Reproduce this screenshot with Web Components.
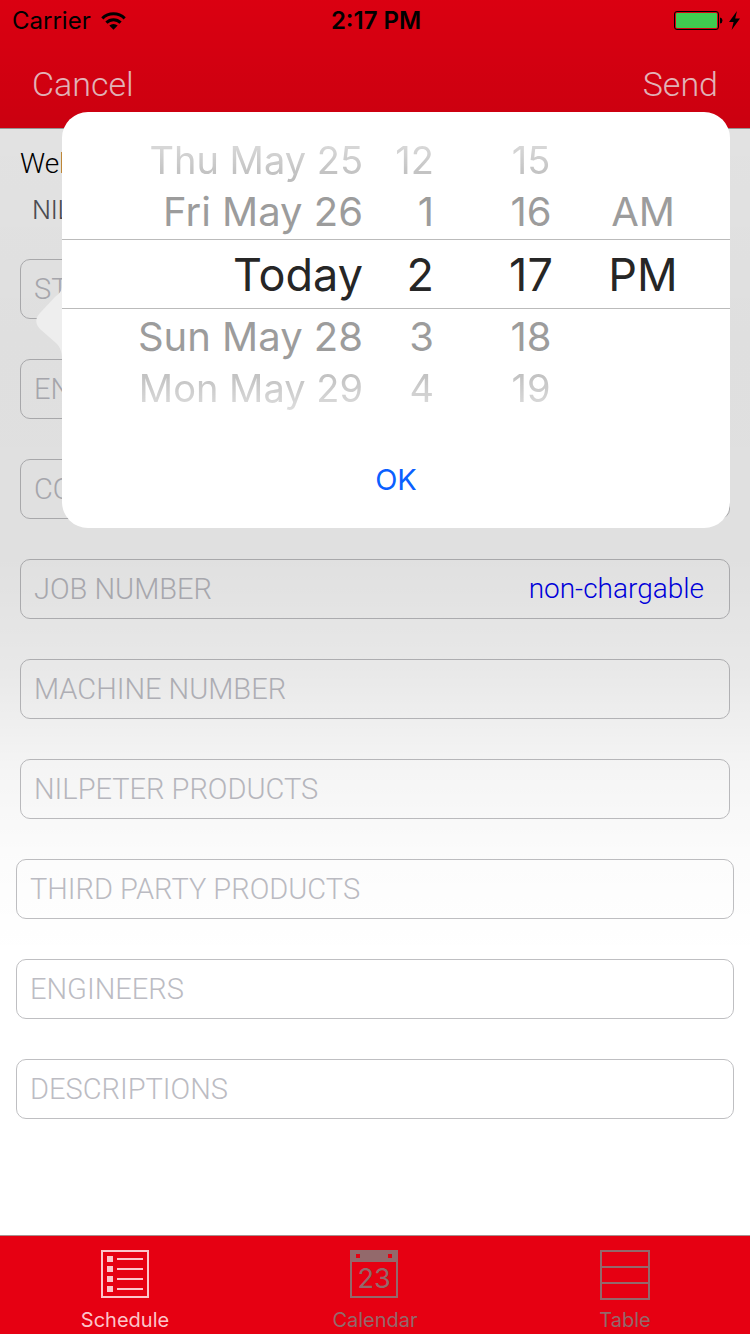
<!DOCTYPE html>
<html lang="en">
<head>
<meta charset="utf-8">
<meta name="viewport" content="width=device-width, initial-scale=1">
<title>Schedule</title>
<style>
  body { margin: 0; background: #fff; font-family: Inter, "Liberation Sans", sans-serif; }
</style>
</head>
<body>
<schedule-app>
  <status-bar slot="top" carrier="Carrier" time="2:17 PM"></status-bar>
  <nav-bar slot="top">
    <nav-action slot="left">Cancel</nav-action>
    <nav-action slot="right">Send</nav-action>
  </nav-bar>

  <form-intro>
    <span slot="title">Wel</span>
    <span slot="subtitle">NIL</span>
  </form-intro>
  <form-field placeholder="ST"></form-field>
  <form-field placeholder="EN"></form-field>
  <form-field placeholder="CO"></form-field>
  <form-field placeholder="JOB NUMBER" action="non-chargable"></form-field>
  <form-field placeholder="MACHINE NUMBER"></form-field>
  <form-field placeholder="NILPETER PRODUCTS"></form-field>
  <form-field wide placeholder="THIRD PARTY PRODUCTS"></form-field>
  <form-field wide placeholder="ENGINEERS"></form-field>
  <form-field wide placeholder="DESCRIPTIONS"></form-field>

  <date-popover slot="popover">
    <picker-wheel label="Date" items="Thu May 25|Fri May 26|Today|Sun May 28|Mon May 29"></picker-wheel>
    <picker-wheel label="Hour" items="12|1|2|3|4"></picker-wheel>
    <picker-wheel label="Minute" align="center" items="15|16|17|18|19"></picker-wheel>
    <picker-wheel label="Period" align="center" items="|AM|PM||"></picker-wheel>
  </date-popover>

  <tab-bar slot="bottom">
    <tab-item active label="Schedule">
      <svg width="50" height="50" viewBox="0 0 50 50" fill="currentColor" aria-hidden="true">
        <path fill-rule="evenodd" d="M1 0h48v48H1zM3 2v44h44V2z"/>
        <path d="M7 6h6v6H7zM7 16h6v6H7zM7 26h6v6H7zM7 36h6v6H7zM17 8h26v2H17zM17 18h26v2H17zM17 28h26v2H17zM17 38h26v2H17z"/>
      </svg>
    </tab-item>
    <tab-item label="Calendar">
      <svg width="50" height="50" viewBox="0 0 50 50" fill="currentColor" aria-hidden="true">
        <path fill-rule="evenodd" d="M0 0h48v48H0zM2 12v34h44V12zM6 4v4h4V4zM38 4v4h4V4z"/>
        <text x="24" y="38" text-anchor="middle" font-size="27" font-family="Inter, sans-serif">23</text>
      </svg>
    </tab-item>
    <tab-item label="Table">
      <svg width="50" height="50" viewBox="0 0 50 50" fill="none" stroke="currentColor" stroke-width="2" aria-hidden="true">
        <path d="M1 1h48v48H1zM1 17h48M1 33h48"/>
      </svg>
    </tab-item>
  </tab-bar>
</schedule-app>

<script>
const define = (name, render) => customElements.define(name, class extends HTMLElement {
  connectedCallback() {
    if (this.shadowRoot) return;
    this.attachShadow({ mode: 'open' }).innerHTML = render(this);
  }
});

define('schedule-app', () => `
  <style>
    :host { display: flex; flex-direction: column; min-height: 100vh; position: relative; background: #fff; }
    header { background: #e60012; border-bottom: 1px solid #a8a8a8; }
    main { flex: 1; display: flex; flex-direction: column; gap: 40px; padding-bottom: 40px; }
    .shade {
      position: absolute; inset: 0; pointer-events: none;
      background: linear-gradient(to bottom,
        rgba(0,0,0,.05) 0%, rgba(0,0,0,.115) 9%, rgba(0,0,0,.125) 25%, rgba(0,0,0,.122) 42%,
        rgba(0,0,0,.09) 50%, rgba(0,0,0,.04) 58%, rgba(0,0,0,.012) 65%, rgba(0,0,0,0) 72%);
    }
    ::slotted([slot=popover]) { position: absolute; top: 112px; left: 62px; right: 20px; }
  </style>
  <header><slot name="top"></slot></header>
  <main><slot></slot></main>
  <slot name="bottom"></slot>
  <div class="shade"></div>
  <slot name="popover"></slot>`);

define('status-bar', el => `
  <style>
    :host { display: grid; grid-template-columns: 1fr auto 1fr; align-items: center; height: 40px; padding: 0 10px 0 12px; color: #000; font-size: 24px; line-height: 42px; }
    .left, .right { display: flex; align-items: center; gap: 10px; }
    .right { justify-content: flex-end; gap: 6px; line-height: 40px; }
    .time { font-weight: 600; }
  </style>
  <span class="left">${el.getAttribute('carrier')}
    <svg width="25" height="18" viewBox="0 0 25 18" fill="none" stroke="#000" stroke-width="3" aria-label="Wi-Fi">
      <path d="M1.3 6.4a16 16 0 0 1 22.4 0M5.4 10.6a10 10 0 0 1 14.2 0"/>
      <path d="M12.5 17.8 8.3 13.6a6 6 0 0 1 8.4 0z" fill="#000" stroke="none"/>
    </svg>
  </span>
  <span class="time">${el.getAttribute('time')}</span>
  <span class="right">
    <svg width="49" height="20" viewBox="0 0 49 20" aria-label="Battery">
      <rect x=".5" y=".5" width="44" height="18" rx="2.5" fill="none" stroke="#000"/>
      <rect x="2" y="2" width="41" height="15" rx="1" fill="#44d955"/>
      <path d="M46 6.5a3 3 0 0 1 2.5 3 3 3 0 0 1-2.5 3z"/>
    </svg>
    <svg width="11" height="20" viewBox="0 0 11 20" aria-label="Charging"><path d="M8 0 0 11h4.6L2.6 19 11 7.6H6.2z"/></svg>
  </span>`);

define('nav-bar', () => `
  <style>
    :host { display: block; }
    nav { display: flex; align-items: center; justify-content: space-between; height: 88px; padding: 0 32px; }
  </style>
  <nav><slot name="left"></slot><slot name="right"></slot></nav>`);

define('nav-action', () => `
  <style>
    :host { display: block; }
    button { border: 0; padding: 0; background: none; color: #f9c5ca; font: 350 34px/40px Roboto, sans-serif; cursor: pointer; }
  </style>
  <button type="button"><slot></slot></button>`);

define('form-intro', () => `
  <style>
    :host { display: block; height: 90px; }
    h1, p { margin: 0; }
    h1 { padding: 18px 20px 0; color: #000; font: 300 28px/34px Roboto, sans-serif; }
    p { padding: 12px 32px 0; color: #55565c; font: 300 25px/34px Inter, sans-serif; }
  </style>
  <h1><slot name="title"></slot></h1>
  <p><slot name="subtitle"></slot></p>`);

define('form-field', el => `
  <style>
    :host { display: block; margin: 0 20px; }
    :host([wide]) { margin: 0 16px; }
    label { display: flex; align-items: center; box-sizing: border-box; height: 60px; padding: 0 25px 0 13px; border: 1px solid #bfbfc2; border-radius: 10px; }
    input { flex: 1; min-width: 0; height: 56px; border: 0; padding: 0; outline: 0; background: none; color: #333; font: 300 29px/34px Roboto, sans-serif; }
    input::placeholder { color: #bcbcc3; opacity: 1; }
    button { border: 0; padding: 0; background: none; color: #0000f5; font: 300 28px/34px Roboto, sans-serif; cursor: pointer; }
  </style>
  <label><input type="text" aria-label="${el.getAttribute('placeholder')}" placeholder="${el.getAttribute('placeholder')}">
  ${el.hasAttribute('action') ? `<button type="button">${el.getAttribute('action')}</button>` : ''}</label>`);

define('date-popover', () => `
  <style>
    :host { display: block; }
    .panel { position: relative; z-index: 1; box-sizing: border-box; padding: 24px 0 28px; border-radius: 26px; background: #fff; }
    .arrow { position: absolute; top: 174px; left: -26px; }
    .wheels { position: relative; display: grid; grid-template-columns: 301fr 71fr 46fr 102fr 122fr 26fr; }
    ::slotted(:nth-child(3)) { grid-column: 4; }
    .band { position: absolute; top: 103px; left: 0; right: 0; height: 68px; border: solid #bbb; border-width: 1px 0; }
    button { display: block; margin: 47px auto 0; border: 0; padding: 0 16px; background: none; color: #0a60ff; font: 400 29px/40px Inter, sans-serif; cursor: pointer; }
  </style>
  <svg class="arrow" width="28" height="74" viewBox="0 0 28 74" aria-hidden="true">
    <path d="M26 0c0 5-3 8-7 11L4 27c-5 5-5 11 0 16l16 14c4 4 6 8 6 17h2V0z" fill="#eeeeee"/>
  </svg>
  <section class="panel" role="dialog" aria-label="Choose date and time">
    <div class="wheels"><div class="band"></div><slot></slot></div>
    <button type="button">OK</button>
  </section>`);

define('picker-wheel', el => {
  const kinds = ['far', 'near', 'now', 'near below', 'far last'];
  return `
  <style>
    :host { display: block; position: relative; color: #9c9c9c; font-size: 40px; font-weight: 380; text-align: right; white-space: nowrap; }
    :host([align=center]) { text-align: center; }
    .near { height: 53px; line-height: 53px; }
    .below { height: 56px; line-height: 58px; }
    .now { height: 70px; color: #262626; font-size: 45px; line-height: 73px; }
    .far { height: 49px; font-size: 38px; line-height: 49px; opacity: .7; -webkit-mask-image: linear-gradient(to top, #000, rgba(0,0,0,.45)); mask-image: linear-gradient(to top, #000, rgba(0,0,0,.45)); }
    .last { -webkit-mask-image: linear-gradient(to bottom, #000, rgba(0,0,0,.45)); mask-image: linear-gradient(to bottom, #000, rgba(0,0,0,.45)); }
  </style>
  <div role="listbox" aria-label="${el.getAttribute('label')}">
    ${el.getAttribute('items').split('|').map((t, i) => t
      ? `<div role="option" aria-selected="${i === 2}" class="${kinds[i]}">${t}</div>`
      : `<div class="${kinds[i]}"></div>`).join('')}
  </div>`;
});

define('tab-bar', () => `
  <style>
    :host { display: block; border-top: 1px solid #a8908f; background: #e60012; }
    nav { display: grid; grid-template-columns: repeat(3, 1fr); height: 98px; }
  </style>
  <nav><slot></slot></nav>`);

define('tab-item', el => `
  <style>
    :host { display: block; color: #93696b; }
    :host([active]) { color: #fcc5ca; }
    a { display: flex; flex-direction: column; align-items: center; gap: 8px; padding-top: 14px; color: inherit; font-size: 20px; line-height: 24px; text-decoration: none; }
  </style>
  <a href="#${el.getAttribute('label').toLowerCase()}"><slot></slot><span>${el.getAttribute('label')}</span></a>`);
</script>
</body>
</html>
